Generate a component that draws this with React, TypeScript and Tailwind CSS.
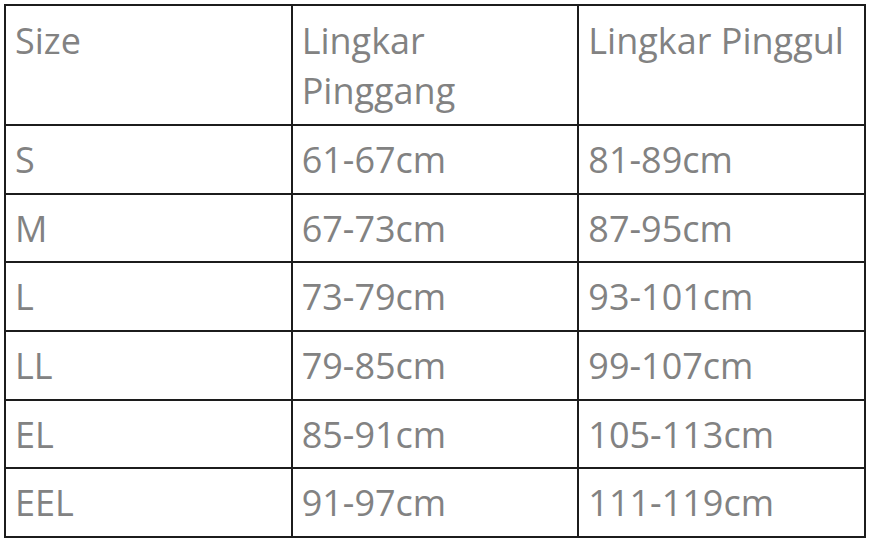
export default function App() {
  const rows = [
    ["S", "61-67cm", "81-89cm"],
    ["M", "67-73cm", "87-95cm"],
    ["L", "73-79cm", "93-101cm"],
    ["LL", "79-85cm", "99-107cm"],
    ["EL", "85-91cm", "105-113cm"],
    ["EEL", "91-97cm", "111-119cm"],
  ]
  const cell = "border-2 border-[#1c1c1c] px-[9px] align-top text-left font-normal"

  return (
    <div className="min-h-[544px] w-[874px] bg-white pt-[4px] pl-[4px]">
      <table
        className="w-[862px] table-fixed border-collapse text-[36px] leading-[50px] text-[#828282]"
        style={{ fontFamily: '"Open Sans", "Liberation Sans", sans-serif' }}
      >
        <thead>
          <tr>
            <th className={`${cell} pt-[10px] pb-[8px]`}>Size</th>
            <th className={`${cell} pt-[10px] pb-[8px]`}>Lingkar Pinggang</th>
            <th className={`${cell} pt-[10px] pb-[8px]`}>Lingkar Pinggul</th>
          </tr>
        </thead>
        <tbody>
          {rows.map((r) => (
            <tr key={r[0]}>
              {r.map((c, i) => (
                <td key={i} className={`${cell} pt-[9px] pb-[7.67px]`}>
                  {c}
                </td>
              ))}
            </tr>
          ))}
        </tbody>
      </table>
    </div>
  )
}
